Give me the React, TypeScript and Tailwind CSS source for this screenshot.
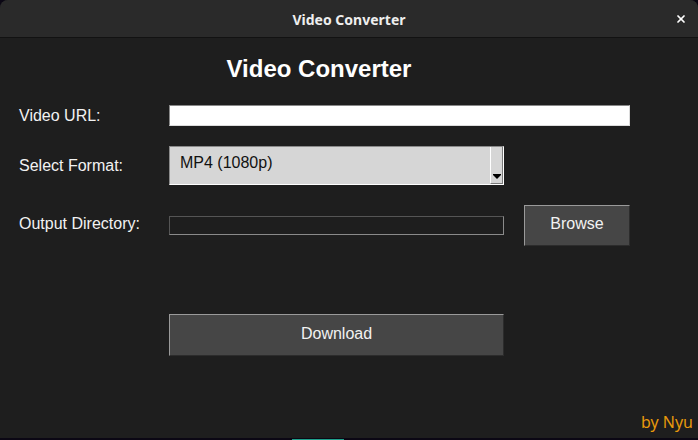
import { X } from "lucide-react";

const label = "w-[150px] text-[16px] text-[#f2f2f2]";

export default function App() {
  return (
    <div className="w-[698px] h-[440px] bg-[#0b0714] flex flex-col overflow-hidden" style={{ fontFamily: '"Liberation Sans", Arial, sans-serif' }}>
      <div className="h-[438px] flex flex-col rounded-tr-[8px] rounded-tl-[8px] overflow-hidden bg-[#1e1e1e]">
        {/* title bar */}
        <div className="h-[38px] shrink-0 bg-[#2a2a2a] border-b border-[#121212] flex items-center relative">
          <div className="flex-1 text-center text-[14px] font-bold text-[#eeeeee] pt-[1px]" style={{ fontFamily: '"Noto Sans", sans-serif' }}>
            Video Converter
          </div>
          <X className="absolute right-[11px] top-[13px] w-[12px] h-[12px] text-white" strokeWidth={3.5} />
        </div>

        {/* body */}
        <div className="flex-1 flex flex-col pl-[19px] relative">
          <h1 className="w-[600px] mt-[17px] text-center text-[24px] leading-[28px] font-bold text-white">Video Converter</h1>

          <div className="mt-[22px] h-[21px] flex items-center">
            <span className={label}>Video URL:</span>
            <div className="w-[461px] h-[21px] bg-white border-t border-l border-[#888888] border-b-[#dcdcdc] border-r-[#dcdcdc] border-b border-r" />
          </div>

          <div className="mt-[20px] h-[39px] flex items-center">
            <span className={label}>Select Format:</span>
            <div className="w-[335px] h-[39px] bg-[#d6d6d6] border border-[#8a8a8a] border-b-white border-r-white flex">
              <span className="flex-1 pl-[10px] pt-[6px] text-[16px] leading-[20px] text-[#111111]">MP4 (1080p)</span>
              <div className="w-[13px] h-full border-l border-white border-r border-b border-r-[#7a7a7a] border-b-[#7a7a7a] flex flex-col justify-end items-center pb-[3px]">
                <svg width="8" height="6" viewBox="0 0 8 6">
                  <rect x="0" y="0" width="8" height="1" fill="#000" />
                  <polygon points="0,1 8,1 4,5" fill="#000" />
                </svg>
              </div>
            </div>
          </div>

          <div className="mt-[20px] h-[41px] flex items-center">
            <span className={label + " -mt-[3px]"}>Output Directory:</span>
            <div className="w-[335px] h-[19px] border border-[#555555] border-b-[#8a8a8a] border-r-[#8a8a8a]" />
            <button className="ml-[20px] w-[106px] h-[41px] bg-[#464646] border border-[#9a9a9a] border-b-[#2c2c2c] border-r-[#2c2c2c] text-[16px] text-[#f2f2f2] pb-[3px]">
              Browse
            </button>
          </div>

          <div className="mt-[68px] pl-[150px]">
            <button className="w-[335px] h-[42px] bg-[#464646] border border-[#9a9a9a] border-b-[#2c2c2c] border-r-[#2c2c2c] text-[16px] text-[#f2f2f2] pb-[3px]">
              Download
            </button>
          </div>

          <div className="absolute right-[5px] bottom-[4px] text-[16px] text-[#e8990c]" style={{ fontFamily: '"Noto Sans", sans-serif' }}>
            by Nyu
          </div>
        </div>
      </div>
      <div className="h-[1px] bg-[#0b0714]" />
      <div className="h-[1px] flex">
        <div className="w-[292px]" />
        <div className="w-[52px] bg-[#1fa08a]" />
      </div>
    </div>
  );
}
